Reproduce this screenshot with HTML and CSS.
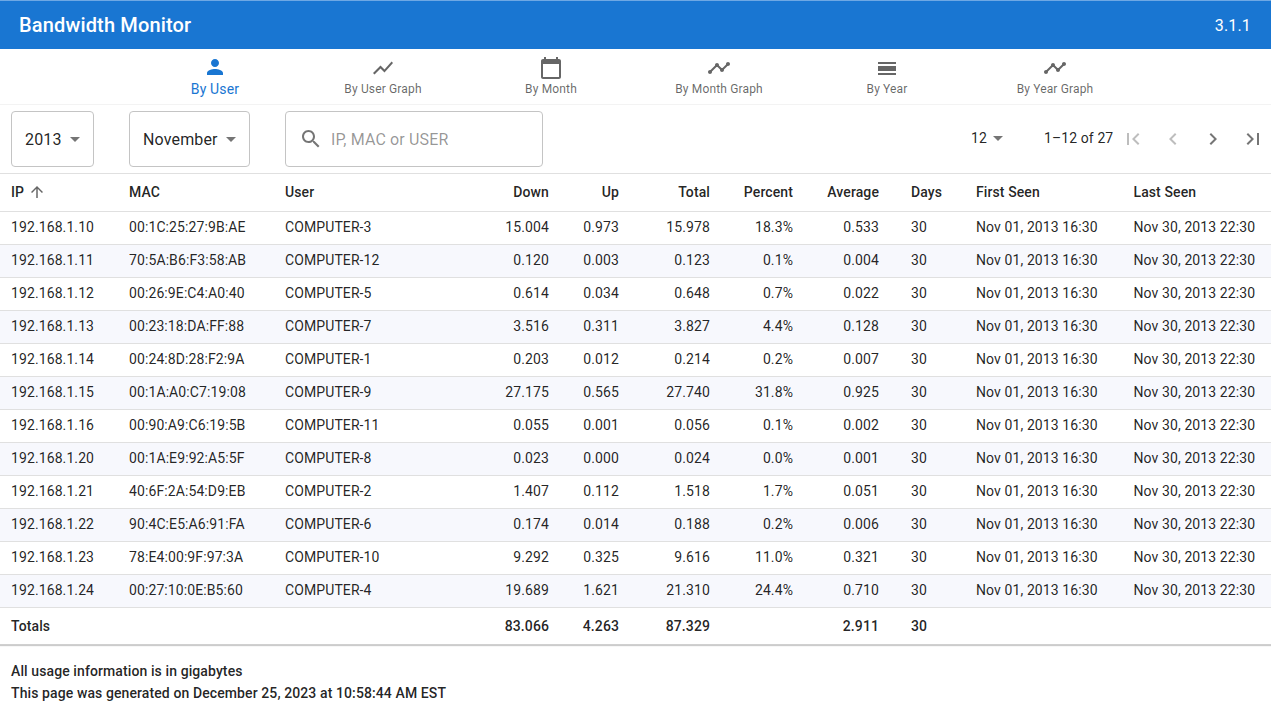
FILE: index.html
```html
<!DOCTYPE html>
<html lang="en">
<head>
<meta charset="utf-8">
<title>Bandwidth Monitor</title>
<link rel="stylesheet" href="styles.css">
</head>
<body>
<header class="appbar">
  <div class="app-title">Bandwidth Monitor</div>
  <div class="app-version">3.1.1</div>
</header>
<nav class="tabs">
  <a class="tab tab-active"><svg class="tab-icon" viewBox="0 0 24 24"><path d="M12 12c2.21 0 4-1.79 4-4s-1.79-4-4-4-4 1.79-4 4 1.79 4 4 4zm0 2c-2.67 0-8 1.34-8 4v2h16v-2c0-2.66-5.33-4-8-4z"/></svg><span>By User</span></a>
  <a class="tab"><svg class="tab-icon" viewBox="0 0 24 24"><path d="M3.5 18.49l6-6.01 4 4L22 6.92l-1.41-1.41-7.09 7.97-4-4L2 16.99z"/></svg><span>By User Graph</span></a>
  <a class="tab"><svg class="tab-icon" viewBox="0 0 24 24"><path d="M20 3h-1V1h-2v2H7V1H5v2H4c-1.1 0-2 .9-2 2v16c0 1.1.9 2 2 2h16c1.1 0 2-.9 2-2V5c0-1.1-.9-2-2-2zm0 18H4V8h16v13z"/></svg><span>By Month</span></a>
  <a class="tab"><svg class="tab-icon" viewBox="0 0 24 24"><path d="M23 8c0 1.1-.9 2-2 2-.18 0-.35-.02-.51-.07l-3.56 3.55c.05.16.07.34.07.52 0 1.1-.9 2-2 2s-2-.9-2-2c0-.18.02-.36.07-.52l-2.55-2.55c-.16.05-.34.07-.52.07s-.36-.02-.52-.07l-4.55 4.56c.05.16.07.33.07.51 0 1.1-.9 2-2 2s-2-.9-2-2 .9-2 2-2c.18 0 .35.02.51.07l4.56-4.55C8.02 9.36 8 9.18 8 9c0-1.1.9-2 2-2s2 .9 2 2c0 .18-.02.36-.07.52l2.55 2.55c.16-.05.34-.07.52-.07s.36.02.52.07l3.55-3.56C19.02 8.35 19 8.18 19 8c0-1.1.9-2 2-2s2 .9 2 2z"/></svg><span>By Month Graph</span></a>
  <a class="tab"><svg class="tab-icon" viewBox="0 0 24 24"><path d="M3 17h18v2H3zm0-7h18v5H3zm0-4h18v2H3z"/></svg><span>By Year</span></a>
  <a class="tab"><svg class="tab-icon" viewBox="0 0 24 24"><path d="M23 8c0 1.1-.9 2-2 2-.18 0-.35-.02-.51-.07l-3.56 3.55c.05.16.07.34.07.52 0 1.1-.9 2-2 2s-2-.9-2-2c0-.18.02-.36.07-.52l-2.55-2.55c-.16.05-.34.07-.52.07s-.36-.02-.52-.07l-4.55 4.56c.05.16.07.33.07.51 0 1.1-.9 2-2 2s-2-.9-2-2 .9-2 2-2c.18 0 .35.02.51.07l4.56-4.55C8.02 9.36 8 9.18 8 9c0-1.1.9-2 2-2s2 .9 2 2c0 .18-.02.36-.07.52l2.55 2.55c.16-.05.34-.07.52-.07s.36.02.52.07l3.55-3.56C19.02 8.35 19 8.18 19 8c0-1.1.9-2 2-2s2 .9 2 2z"/></svg><span>By Year Graph</span></a>
</nav>
<section class="controls">
  <div class="field field-year"><span>2013</span><svg class="caret" viewBox="0 0 24 24"><path d="M7 10l5 5 5-5z"/></svg></div>
  <div class="field field-month"><span>November</span><svg class="caret" viewBox="0 0 24 24"><path d="M7 10l5 5 5-5z"/></svg></div>
  <div class="field field-search"><svg class="search-icon" viewBox="0 0 24 24"><path d="M15.5 14h-.79l-.28-.27C15.41 12.59 16 11.11 16 9.5 16 5.91 13.09 3 9.5 3S3 5.91 3 9.5 5.91 16 9.5 16c1.61 0 3.09-.59 4.23-1.57l.27.28v.79l5 4.99L20.49 19l-4.99-5zm-6 0C7.01 14 5 11.99 5 9.5S7.01 5 9.5 5 14 7.01 14 9.5 11.99 14 9.5 14z"/></svg><span class="placeholder">IP, MAC or USER</span></div>
  <div class="pager">
    <div class="pager-size"><span>12</span><svg class="caret" viewBox="0 0 24 24"><path d="M7 10l5 5 5-5z"/></svg></div>
    <div class="pager-range">1–12 of 27</div>
    <svg class="pager-btn pager-off" viewBox="0 0 24 24"><path d="M18.41 16.59L13.82 12l4.59-4.59L17 6l-6 6 6 6zM6 6h2v12H6z"/></svg>
    <svg class="pager-btn pager-off" viewBox="0 0 24 24"><path d="M15.41 7.41L14 6l-6 6 6 6 1.41-1.41L10.83 12z"/></svg>
    <svg class="pager-btn" viewBox="0 0 24 24"><path d="M10 6L8.59 7.41 13.17 12l-4.58 4.59L10 18l6-6z"/></svg>
    <svg class="pager-btn" viewBox="0 0 24 24"><path d="M5.59 7.41L10.18 12l-4.59 4.59L7 18l6-6-6-6zM16 6h2v12h-2z"/></svg>
  </div>
</section>
<table class="usage">
  <colgroup>
    <col class="c-ip"><col class="c-mac"><col class="c-user"><col class="c-down"><col class="c-up"><col class="c-total"><col class="c-pct"><col class="c-avg"><col class="c-days"><col class="c-first"><col class="c-last">
  </colgroup>
  <thead>
    <tr>
      <th class="pad">IP<svg class="sort" viewBox="0 0 24 24"><path d="M4 12l1.41 1.41L11 7.83V20h2V7.83l5.58 5.59L20 12l-8-8-8 8z"/></svg></th>
      <th class="pad">MAC</th><th class="pad">User</th><th class="right">Down</th><th class="right">Up</th><th class="right">Total</th><th class="right">Percent</th><th class="right">Average</th><th class="days">Days</th><th>First Seen</th><th>Last Seen</th>
    </tr>
  </thead>
  <tbody>
    <tr><td class="pad">192.168.1.10</td><td class="pad">00:1C:25:27:9B:AE</td><td class="pad">COMPUTER-3</td><td class="right">15.004</td><td class="right">0.973</td><td class="right">15.978</td><td class="right">18.3%</td><td class="right">0.533</td><td class="days">30</td><td>Nov 01, 2013 16:30</td><td>Nov 30, 2013 22:30</td></tr>
    <tr><td class="pad">192.168.1.11</td><td class="pad">70:5A:B6:F3:58:AB</td><td class="pad">COMPUTER-12</td><td class="right">0.120</td><td class="right">0.003</td><td class="right">0.123</td><td class="right">0.1%</td><td class="right">0.004</td><td class="days">30</td><td>Nov 01, 2013 16:30</td><td>Nov 30, 2013 22:30</td></tr>
    <tr><td class="pad">192.168.1.12</td><td class="pad">00:26:9E:C4:A0:40</td><td class="pad">COMPUTER-5</td><td class="right">0.614</td><td class="right">0.034</td><td class="right">0.648</td><td class="right">0.7%</td><td class="right">0.022</td><td class="days">30</td><td>Nov 01, 2013 16:30</td><td>Nov 30, 2013 22:30</td></tr>
    <tr><td class="pad">192.168.1.13</td><td class="pad">00:23:18:DA:FF:88</td><td class="pad">COMPUTER-7</td><td class="right">3.516</td><td class="right">0.311</td><td class="right">3.827</td><td class="right">4.4%</td><td class="right">0.128</td><td class="days">30</td><td>Nov 01, 2013 16:30</td><td>Nov 30, 2013 22:30</td></tr>
    <tr><td class="pad">192.168.1.14</td><td class="pad">00:24:8D:28:F2:9A</td><td class="pad">COMPUTER-1</td><td class="right">0.203</td><td class="right">0.012</td><td class="right">0.214</td><td class="right">0.2%</td><td class="right">0.007</td><td class="days">30</td><td>Nov 01, 2013 16:30</td><td>Nov 30, 2013 22:30</td></tr>
    <tr><td class="pad">192.168.1.15</td><td class="pad">00:1A:A0:C7:19:08</td><td class="pad">COMPUTER-9</td><td class="right">27.175</td><td class="right">0.565</td><td class="right">27.740</td><td class="right">31.8%</td><td class="right">0.925</td><td class="days">30</td><td>Nov 01, 2013 16:30</td><td>Nov 30, 2013 22:30</td></tr>
    <tr><td class="pad">192.168.1.16</td><td class="pad">00:90:A9:C6:19:5B</td><td class="pad">COMPUTER-11</td><td class="right">0.055</td><td class="right">0.001</td><td class="right">0.056</td><td class="right">0.1%</td><td class="right">0.002</td><td class="days">30</td><td>Nov 01, 2013 16:30</td><td>Nov 30, 2013 22:30</td></tr>
    <tr><td class="pad">192.168.1.20</td><td class="pad">00:1A:E9:92:A5:5F</td><td class="pad">COMPUTER-8</td><td class="right">0.023</td><td class="right">0.000</td><td class="right">0.024</td><td class="right">0.0%</td><td class="right">0.001</td><td class="days">30</td><td>Nov 01, 2013 16:30</td><td>Nov 30, 2013 22:30</td></tr>
    <tr><td class="pad">192.168.1.21</td><td class="pad">40:6F:2A:54:D9:EB</td><td class="pad">COMPUTER-2</td><td class="right">1.407</td><td class="right">0.112</td><td class="right">1.518</td><td class="right">1.7%</td><td class="right">0.051</td><td class="days">30</td><td>Nov 01, 2013 16:30</td><td>Nov 30, 2013 22:30</td></tr>
    <tr><td class="pad">192.168.1.22</td><td class="pad">90:4C:E5:A6:91:FA</td><td class="pad">COMPUTER-6</td><td class="right">0.174</td><td class="right">0.014</td><td class="right">0.188</td><td class="right">0.2%</td><td class="right">0.006</td><td class="days">30</td><td>Nov 01, 2013 16:30</td><td>Nov 30, 2013 22:30</td></tr>
    <tr><td class="pad">192.168.1.23</td><td class="pad">78:E4:00:9F:97:3A</td><td class="pad">COMPUTER-10</td><td class="right">9.292</td><td class="right">0.325</td><td class="right">9.616</td><td class="right">11.0%</td><td class="right">0.321</td><td class="days">30</td><td>Nov 01, 2013 16:30</td><td>Nov 30, 2013 22:30</td></tr>
    <tr><td class="pad">192.168.1.24</td><td class="pad">00:27:10:0E:B5:60</td><td class="pad">COMPUTER-4</td><td class="right">19.689</td><td class="right">1.621</td><td class="right">21.310</td><td class="right">24.4%</td><td class="right">0.710</td><td class="days">30</td><td>Nov 01, 2013 16:30</td><td>Nov 30, 2013 22:30</td></tr>
  </tbody>
  <tfoot>
    <tr>
      <td class="pad">Totals</td><td></td><td></td><td class="right">83.066</td><td class="right">4.263</td><td class="right">87.329</td><td></td><td class="right">2.911</td><td class="days">30</td><td></td><td></td>
    </tr>
  </tfoot>
</table>
<footer class="notes">
  <div>All usage information is in gigabytes</div>
  <div>This page was generated on December 25, 2023 at 10:58:44 AM EST</div>
</footer>
</body>
</html>
```
FILE: styles.css
```css
* { box-sizing: border-box; }
html, body { margin: 0; padding: 0; }
body {
  width: 1271px;
  height: 708px;
  overflow: hidden;
  background: #fff;
  color: rgba(0, 0, 0, 0.87);
  font-family: Roboto, "Liberation Sans", sans-serif;
  font-size: 14px;
  letter-spacing: 0.1px;
}
.appbar {
  height: 49px;
  border-top: 1px solid #6ea8e4;
  background: #1976d2;
  color: #fff;
  display: flex;
  align-items: center;
  justify-content: space-between;
  padding: 0 20px 0 19px;
}
.app-title { font-size: 20px; font-weight: 500; letter-spacing: 0.15px; }
.app-version { font-size: 16px; letter-spacing: 0.15px; }
.tabs {
  height: 56px;
  display: flex;
  justify-content: center;
  padding-right: 1px;
  border-bottom: 1px solid #f3f3f3;
}
.tab {
  width: 168px;
  display: flex;
  flex-direction: column;
  align-items: center;
  padding-top: 7px;
  color: rgba(0, 0, 0, 0.6);
  fill: rgba(0, 0, 0, 0.6);
  font-size: 12px;
  line-height: 18px;
  letter-spacing: 0.15px;
}
.tab-active {
  padding-top: 6px;
  color: #1976d2;
  fill: #1976d2;
  font-size: 14px;
  line-height: 20px;
}
.tab-icon { width: 24px; height: 24px; display: block; flex: none; }
.controls {
  height: 69px;
  display: flex;
  align-items: center;
  padding: 0 6px 0 11px;
  border-bottom: 1px solid #e0e0e0;
}
.field {
  height: 56px;
  padding-top: 1px;
  border: 1px solid #c4c4c4;
  border-radius: 4px;
  display: flex;
  align-items: center;
  font-size: 16px;
  letter-spacing: 0.15px;
  margin-top: -1px;
}
.field-year { width: 83px; padding-left: 13px; margin-right: 35px; }
.field-month { width: 121px; padding-left: 13px; margin-right: 35px; }
.field-search { width: 258px; padding-left: 13px; }
.caret { width: 24px; height: 24px; fill: rgba(0, 0, 0, 0.54); flex: none; }
.field .caret { margin-left: 1px; }
.search-icon { width: 24px; height: 24px; fill: rgba(0, 0, 0, 0.54); margin-right: 8px; flex: none; }
.placeholder { color: rgba(0, 0, 0, 0.42); }
.pager { margin-left: auto; display: flex; align-items: center; margin-top: -2px; }
.pager-size { display: flex; align-items: center; width: 73px; }
.pager-size .caret { margin-left: -1px; }
.pager-range { width: 77px; }
.pager-btn { width: 24px; height: 24px; margin-top: 2px; fill: rgba(0, 0, 0, 0.54); }
.pager-btn + .pager-btn { margin-left: 16px; }
.pager-off { fill: rgba(0, 0, 0, 0.26); }
.usage {
  width: 1271px;
  table-layout: fixed;
  border-collapse: collapse;
  box-shadow: 0 1px 1px rgba(0, 0, 0, 0.2);
}
.c-ip { width: 118px; }
.c-mac { width: 156px; }
.c-user { width: 206px; }
.c-down { width: 69px; }
.c-up { width: 70px; }
.c-total { width: 91px; }
.c-pct { width: 83px; }
.c-avg { width: 86px; }
.c-days { width: 97px; }
.c-first { width: 157.5px; }
.c-last { width: 137.5px; }
th, td { padding: 0; white-space: nowrap; text-align: left; }
th {
  height: 37px;
  font-weight: 500;
  border-bottom: 1px solid #e0e0e0;
}
tbody td {
  height: 33px;
  padding-bottom: 2px;
  border-bottom: 1px solid #e0e0e0;
}
tbody tr:nth-child(even) { background: #f7f8fd; }
tfoot td {
  height: 37px;
  padding-top: 1px;
  font-weight: 500;
  border-bottom: 1px solid #d0d0d0;
}
th.right, td.right { text-align: right; }
.pad { padding-left: 11px; }
.days { padding-left: 32px; }
.sort {
  width: 18px;
  height: 18px;
  fill: rgba(0, 0, 0, 0.6);
  vertical-align: -4px;
  margin-left: 4px;
}
.notes {
  padding: 15px 11px 0;
  font-weight: 500;
  line-height: 22px;
}
```
